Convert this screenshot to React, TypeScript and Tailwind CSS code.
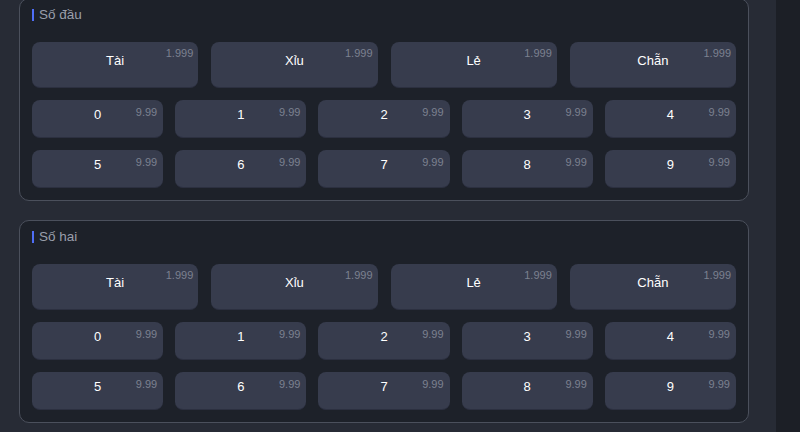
import React from 'react';

const bigBets = ['Tài', 'Xỉu', 'Lẻ', 'Chẵn'];
const digits = ['0', '1', '2', '3', '4', '5', '6', '7', '8', '9'];

const Section: React.FC<{ title: string }> = ({ title }) => (
  <div className="rounded-[10px] border border-[#4b505c] bg-[#1d2129] px-3 pb-3">
    {/* Title */}
    <div className="flex items-center gap-[5px] pt-[7px] h-[25px] mb-[18px]">
      <span className="w-[2px] h-[12px] bg-[#4f6ef7]" />
      <span className="text-[13.5px] leading-[18px] text-[#9a9fab]">{title}</span>
    </div>

    {/* Big bets */}
    <div className="grid grid-cols-4 gap-x-[13px]">
      {bigBets.map((b) => (
        <button
          key={b}
          className="relative h-[46px] rounded-lg bg-[#373c4d] border-b border-[#2c3040] text-center"
        >
          <span className="block pt-[9px] pb-[17px] text-[13px] leading-[20px] font-medium text-white">{b}</span>
          <span className="absolute top-[4px] right-[5px] text-[11px] leading-[14px] text-[#7c8190]">1.999</span>
        </button>
      ))}
    </div>

    {/* Digits */}
    <div className="grid grid-cols-5 gap-x-[12px] gap-y-[12px] mt-[12px]">
      {digits.map((d) => (
        <button
          key={d}
          className="relative h-[38px] rounded-lg bg-[#373c4d] border-b border-[#2c3040] text-center"
        >
          <span className="block pt-[5px] pb-[13px] text-[13px] leading-[20px] font-medium text-white">{d}</span>
          <span className="absolute top-[5px] right-[6px] text-[11px] leading-[14px] text-[#7c8190]">9.99</span>
        </button>
      ))}
    </div>
  </div>
);

const App: React.FC = () => {
  return (
    <div
      className="flex w-[800px] h-[432px] overflow-hidden bg-[#1c1f26]"
      style={{ fontFamily: '"Liberation Sans", Arial, sans-serif' }}
    >
      <div className="w-[776px] h-full bg-[#272b35] pl-[19px] pr-[27px]">
        <div className="-mt-[2px] flex flex-col gap-[19px]">
          <Section title="Số đầu" />
          <Section title="Số hai" />
        </div>
      </div>
      <div className="flex-1" />
    </div>
  );
};

export default App;
